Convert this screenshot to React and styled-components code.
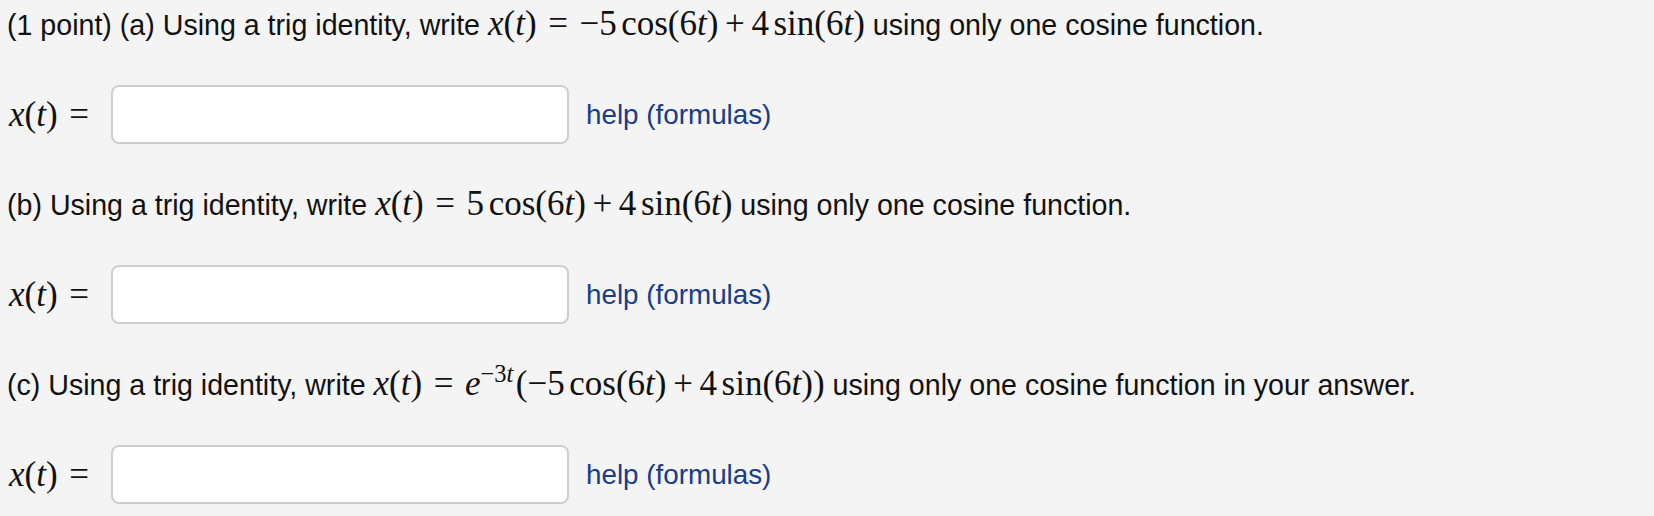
import styled, { createGlobalStyle } from 'styled-components'

const GlobalStyle = createGlobalStyle`
  html, body {
    margin: 0;
    background: #f4f4f4;
  }
  body {
    font-family: "Liberation Sans", Arial, sans-serif;
    color: #111;
  }
`

const Page = styled.div`
  display: flex;
  flex-direction: column;
  gap: 41px;
  padding: 5px 7px 0;
`

const Part = styled.section`
  display: flex;
  flex-direction: column;
  gap: 40px;
`

const Question = styled.p`
  margin: 0;
  height: 40px;
  font-size: 28.6px;
  line-height: 40px;
  white-space: nowrap;
`

const Math = styled.span`
  font-family: "Liberation Serif", "Times New Roman", serif;
  font-size: 35px;
  line-height: 0;
  white-space: nowrap;
`

const Var = styled.i`
  font-style: italic;
`

const Op = styled.span`
  margin: 0 ${(p) => p.$space || 0}em;
`

const Thin = styled.span`
  margin-left: 0.13em;
`

const Sup = styled.sup`
  font-size: 0.7em;
  line-height: 0;
  vertical-align: 0.55em;
  margin-right: 0.1em;
`

const AnswerRow = styled.div`
  display: flex;
  align-items: center;
  height: 59px;
`

const Label = styled(Math)`
  width: 102px;
  padding-left: 2px;
  line-height: normal;
`

const Input = styled.input`
  box-sizing: border-box;
  width: 458px;
  height: 59px;
  margin: 0 17px 0 0;
  background: #fff;
  border: 2px solid #cdcdcd;
  border-radius: 8px;
  outline: none;
`

const Help = styled.a`
  font-size: 27.8px;
  color: #173c8b;
  text-decoration: none;
  cursor: pointer;
`

const X = () => (
  <>
    <Var>x</Var>(<Var>t</Var>)<Op $space={0.33}>=</Op>
  </>
)

const Sum = ({ first }) => (
  <>
    {first}
    <Thin />cos(6<Var>t</Var>)<Op $space={0.19}>+</Op>4<Thin />sin(6<Var>t</Var>)
  </>
)

const Answer = () => (
  <AnswerRow>
    <Label>
      <X />
    </Label>
    <Input type="text" />
    <Help>help (formulas)</Help>
  </AnswerRow>
)

const parts = [
  {
    lead: '(1 point) (a) Using a trig identity, write ',
    math: <Sum first="−5" />,
    tail: ' using only one cosine function.',
  },
  {
    lead: '(b) Using a trig identity, write ',
    math: <Sum first="5" />,
    tail: ' using only one cosine function.',
  },
  {
    lead: '(c) Using a trig identity, write ',
    math: (
      <>
        <Var>e</Var>
        <Sup>
          −3<Var>t</Var>
        </Sup>
        (<Sum first="−5" />)
      </>
    ),
    tail: ' using only one cosine function in your answer.',
  },
]

export default function App() {
  return (
    <Page>
      <GlobalStyle />
      {parts.map((p, i) => (
        <Part key={i}>
          <Question>
            {p.lead}
            <Math>
              <X />
              {p.math}
            </Math>
            {p.tail}
          </Question>
          <Answer />
        </Part>
      ))}
    </Page>
  )
}
